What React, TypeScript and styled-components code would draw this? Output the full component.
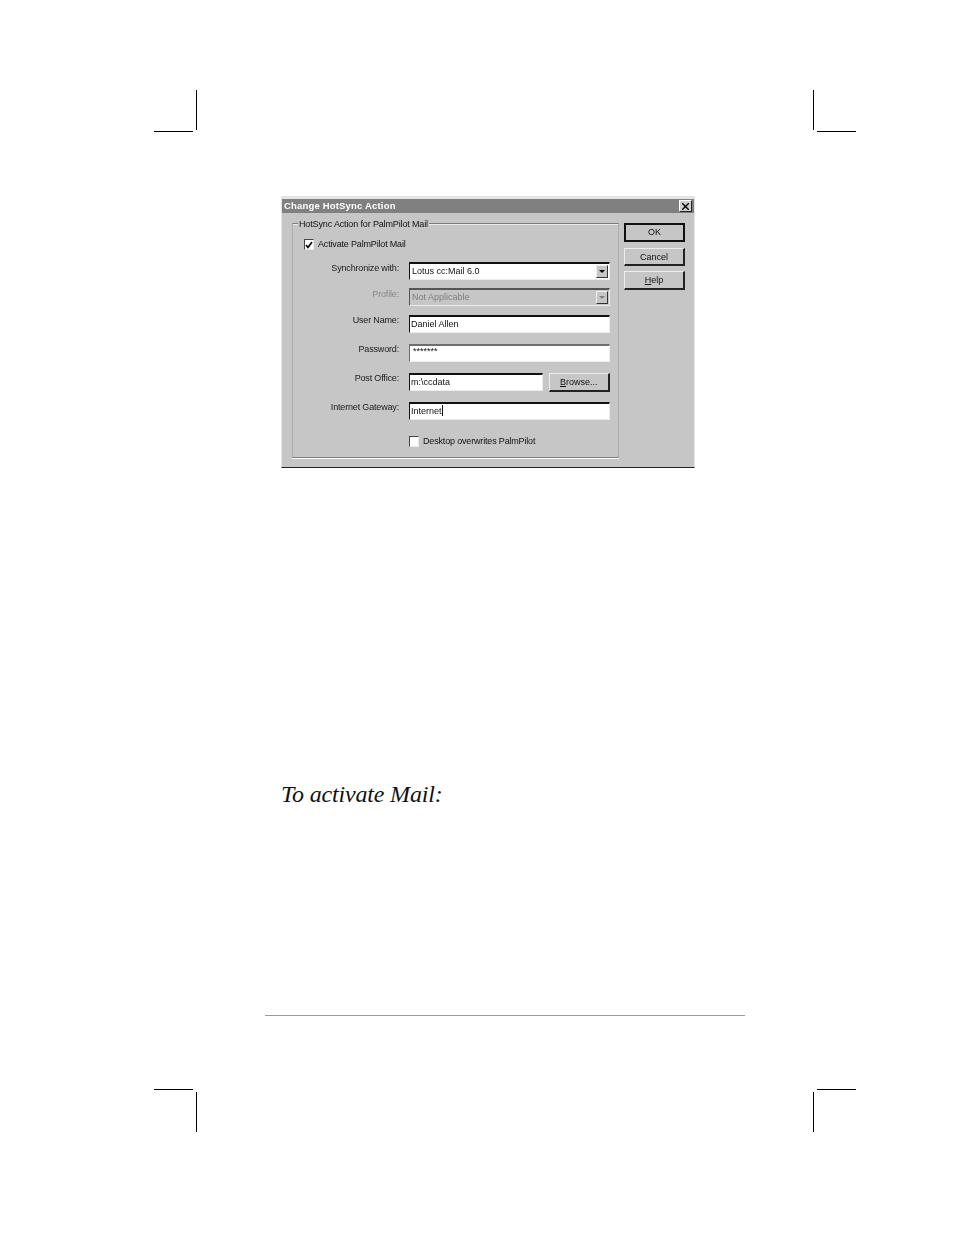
import React from "react";
import styled, { createGlobalStyle } from "styled-components";

const GlobalStyle = createGlobalStyle`
  html, body {
    margin: 0;
    padding: 0;
    background: #ffffff;
  }
`;

const Page = styled.div`
  width: 954px;
  height: 1235px;
  overflow: hidden;
  padding-top: 90px;
  box-sizing: border-box;
`;

const CropRow = styled.div<{ $h?: number }>`
  display: flex;
  justify-content: space-between;
  padding: 0 98px 0 154px;
  height: ${(p) => p.$h ?? 42}px;
`;

const CropMark = styled.div<{ $flip?: boolean; $bottom?: boolean }>`
  position: relative;
  width: 43px;
  height: 100%;
  &::before {
    content: "";
    position: absolute;
    width: 39px;
    height: 1px;
    background: #000;
    ${(p) => (p.$bottom ? "top: 0;" : "bottom: 0;")}
    ${(p) => (p.$flip ? "right: 0;" : "left: 0;")}
  }
  &::after {
    content: "";
    position: absolute;
    width: 1px;
    height: 40px;
    background: #000;
    ${(p) => (p.$bottom ? "bottom: 0;" : "top: 0;")}
    ${(p) => (p.$flip ? "left: 0;" : "right: 0;")}
  }
`;

const Dialog = styled.div`
  margin: 64px 0 0 281px;
  width: 414px;
  height: 272px;
  box-sizing: border-box;
  background: #c6c6c6;
  border-top: 3px solid #e4e4e4;
  border-left: 1px solid #e4e4e4;
  border-right: 1px solid #e4e4e4;
  border-bottom: 1px solid #222;
  font-family: "Liberation Sans", Arial, sans-serif;
  font-size: 9px;
  letter-spacing: -0.17px;
  color: #111;
  filter: blur(0.4px);
`;

const TitleBar = styled.div`
  height: 14px;
  background: #808080;
  display: flex;
  align-items: center;
  justify-content: space-between;
  padding: 0 2px;
  color: #fff;
  font-weight: bold;
  font-size: 9.5px;
  letter-spacing: 0.18px;
`;

const TitleText = styled.span`
  margin-top: -2px;
`;

const CloseBox = styled.div`
  width: 13px;
  height: 12px;
  box-sizing: border-box;
  background: #d0d0d0;
  border: 1px solid;
  border-color: #fff #222 #222 #fff;
  display: flex;
  align-items: center;
  justify-content: center;
`;

const Body = styled.div`
  display: flex;
  align-items: flex-start;
  padding: 10px 0 0 10px;
  gap: 5px;
`;

const GroupBox = styled.div`
  position: relative;
  width: 327px;
  height: 235px;
  box-sizing: border-box;
  border: 1px solid #adadad;
  border-top-color: #7c7c7c;
  border-bottom-color: #7c7c7c;
  box-shadow: 0 1px 0 #fff, inset 0 1px 0 #eee;
  padding: 15px 0 0 11px;
`;

const Legend = styled.div`
  position: absolute;
  top: -5px;
  left: 5px;
  background: #c6c6c6;
  padding: 0 1px;
  line-height: 10px;
  letter-spacing: -0.14px;
`;

const CheckRow = styled.div<{ $indent?: number; $top?: number }>`
  display: flex;
  align-items: center;
  gap: 4px;
  height: 11px;
  margin-left: ${(p) => p.$indent ?? 0}px;
  margin-top: ${(p) => p.$top ?? 0}px;
`;

const CheckLabel = styled.span`
  margin-top: -2px;
`;

const CheckBox = styled.div`
  width: 10px;
  height: 11px;
  box-sizing: border-box;
  background: #fff;
  border: 1px solid;
  border-color: #444 #e8e8e8 #e8e8e8 #444;
  display: flex;
  align-items: center;
  justify-content: center;
`;

const FormGrid = styled.div`
  display: grid;
  grid-template-columns: 106px 201px;
  grid-template-rows: 26px 27px 29px 29px 29px 29px;
  column-gap: 10px;
  align-items: start;
  margin: 12px 0 0 -11px;
`;

const FieldLabel = styled.div<{ $disabled?: boolean; $top?: number }>`
  text-align: right;
  line-height: 11px;
  margin-top: ${(p) => p.$top ?? 0}px;
  white-space: nowrap;
  color: ${(p) => (p.$disabled ? "#8a8a8a" : "#1a1a1a")};
`;

const Field = styled.div<{ $disabled?: boolean; $muted?: boolean; $w?: number }>`
  width: ${(p) => p.$w ?? 201}px;
  height: 18px;
  box-sizing: border-box;
  background: ${(p) => (p.$disabled ? "#c6c6c6" : "#fff")};
  color: ${(p) => (p.$disabled ? "#7e7e7e" : "#111")};
  border-style: solid;
  border-width: 2px 1px 1px 1px;
  border-color: ${(p) => (p.$muted ? "#6e6e6e" : p.$disabled ? "#555" : "#111")} #ececec #ececec
    ${(p) => (p.$muted ? "#6e6e6e" : p.$disabled ? "#555" : "#111")};
  display: flex;
  align-items: center;
  padding: 0 1px;
  letter-spacing: 0;
  white-space: nowrap;
`;

const FieldValue = styled.span<{ $inset?: number }>`
  flex: 1;
  margin-top: -2px;
  padding-left: ${(p) => p.$inset ?? 0}px;
`;

const PasswordDots = styled.span`
  flex: 1;
  font-size: 9px;
  line-height: 9px;
  padding-left: 2px;
  margin-top: -4px;
`;

const Caret = styled.span`
  display: inline-block;
  width: 1px;
  height: 11px;
  background: #111;
  vertical-align: -2px;
`;

const ArrowButton = styled.div<{ $disabled?: boolean }>`
  width: 12px;
  height: 13px;
  box-sizing: border-box;
  background: #c6c6c6;
  border: 1px solid;
  border-color: #f0f0f0 #333 #333 #f0f0f0;
  display: flex;
  align-items: center;
  justify-content: center;
  &::after {
    content: "";
    border-style: solid;
    border-width: 3px 3px 0 3px;
    border-color: ${(p) => (p.$disabled ? "#808080" : "#000")} transparent transparent transparent;
  }
`;

const InlineRow = styled.div`
  display: flex;
  gap: 6px;
`;

const ButtonColumn = styled.div`
  display: flex;
  flex-direction: column;
`;

const DialogButton = styled.div<{ $primary?: boolean; $w?: number; $h?: number; $mb?: number }>`
  width: ${(p) => p.$w ?? 61}px;
  height: ${(p) => p.$h ?? 19}px;
  margin-bottom: ${(p) => p.$mb ?? 0}px;
  box-sizing: border-box;
  background: #c6c6c6;
  border-style: solid;
  border-width: ${(p) => (p.$primary ? "2px" : "1px 2px 2px 1px")};
  border-color: ${(p) => (p.$primary ? "#111" : "#eee #222 #222 #eee")};
  padding-bottom: ${(p) => (p.$primary ? 2 : 0)}px;
  display: flex;
  align-items: center;
  justify-content: center;
  letter-spacing: 0;
  u {
    text-decoration: underline;
  }
`;

const StepHeading = styled.h2`
  margin: 311px 0 0 281px;
  font-family: "Liberation Serif", "Times New Roman", serif;
  font-style: italic;
  font-weight: normal;
  font-size: 24px;
  line-height: 30px;
  letter-spacing: -0.17px;
  color: #111;
`;

const FootRule = styled.div`
  margin: 206px 0 73px 265px;
  width: 480px;
  height: 1px;
  background: #9a9a9a;
`;

const App: React.FC = () => {
  return (
    <Page>
      <GlobalStyle />
      <CropRow>
        <CropMark />
        <CropMark $flip />
      </CropRow>

      <Dialog>
        <TitleBar>
          <TitleText>Change HotSync Action</TitleText>
          <CloseBox>
            <svg width="7" height="7" viewBox="0 0 7 7">
              <path d="M0 0 7 7M7 0 0 7" stroke="#000" strokeWidth="1.4" />
            </svg>
          </CloseBox>
        </TitleBar>
        <Body>
          <GroupBox>
            <Legend>HotSync Action for PalmPilot Mail</Legend>
            <CheckRow>
              <CheckBox>
                <svg width="8" height="8" viewBox="0 0 8 8">
                  <path d="M1 4 3 6.5 7 1" fill="none" stroke="#000" strokeWidth="1.6" />
                </svg>
              </CheckBox>
              <CheckLabel>Activate PalmPilot Mail</CheckLabel>
            </CheckRow>
            <FormGrid>
              <FieldLabel $top={1}>Synchronize with:</FieldLabel>
              <Field>
                <FieldValue $inset={1}>Lotus cc:Mail 6.0</FieldValue>
                <ArrowButton />
              </Field>
              <FieldLabel $disabled $top={1}>Profile:</FieldLabel>
              <Field $disabled>
                <FieldValue $inset={1}>Not Applicable</FieldValue>
                <ArrowButton $disabled />
              </Field>
              <FieldLabel>User Name:</FieldLabel>
              <Field>
                <FieldValue>Daniel Allen</FieldValue>
              </Field>
              <FieldLabel>Password:</FieldLabel>
              <Field $muted>
                <PasswordDots>*******</PasswordDots>
              </Field>
              <FieldLabel>Post Office:</FieldLabel>
              <InlineRow>
                <Field $w={135}>
                  <FieldValue>m:\ccdata</FieldValue>
                </Field>
                <DialogButton $w={62}>
                  <span>
                    <u>B</u>rowse...
                  </span>
                </DialogButton>
              </InlineRow>
              <FieldLabel>Internet Gateway:</FieldLabel>
              <Field>
                <FieldValue>
                  Internet
                  <Caret />
                </FieldValue>
              </Field>
            </FormGrid>
            <CheckRow $indent={105} $top={5}>
              <CheckBox />
              <CheckLabel>Desktop overwrites PalmPilot</CheckLabel>
            </CheckRow>
          </GroupBox>
          <ButtonColumn>
            <DialogButton $primary $mb={6}>OK</DialogButton>
            <DialogButton $h={18} $mb={5}>Cancel</DialogButton>
            <DialogButton>
              <span>
                <u>H</u>elp
              </span>
            </DialogButton>
          </ButtonColumn>
        </Body>
      </Dialog>

      <StepHeading>To activate Mail:</StepHeading>
      <FootRule />

      <CropRow $h={43}>
        <CropMark $bottom />
        <CropMark $bottom $flip />
      </CropRow>
    </Page>
  );
};

export default App;
